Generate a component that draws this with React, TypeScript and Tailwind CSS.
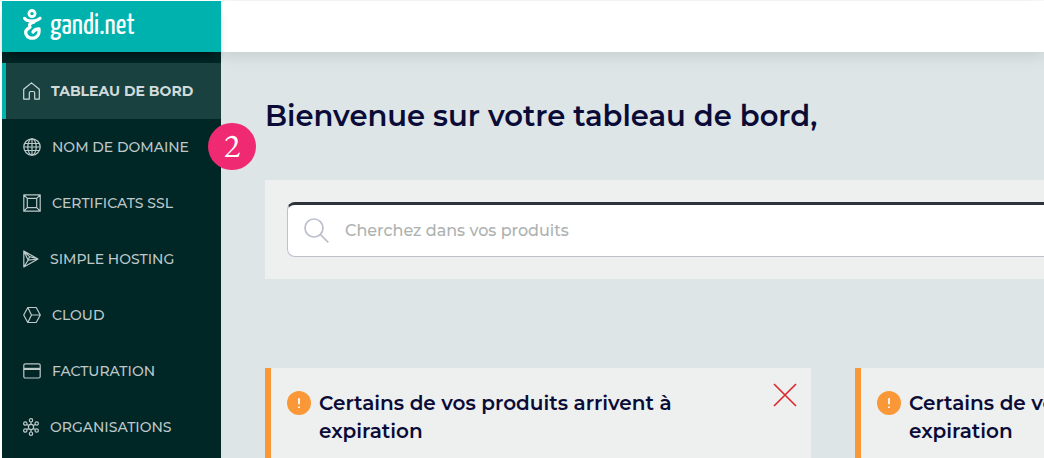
import type { ReactNode } from "react";

type NavItem = { label: string; icon: ReactNode; active?: boolean; badge?: string };

function Icon({ children, width = 18 }: { children: ReactNode; width?: number }) {
  return (
    <svg
      width={width}
      height="18"
      viewBox={`0 0 ${width} 18`}
      fill="none"
      stroke="currentColor"
      strokeWidth="1.2"
      strokeLinejoin="round"
      className="shrink-0"
      aria-hidden="true"
    >
      {children}
    </svg>
  );
}

const items: NavItem[] = [
  {
    label: "Tableau de bord",
    active: true,
    icon: (
      <Icon width={17}>
        <path d="M.7 7.2 8.5.9l7.8 6.3v9.9h-4.6V11c0-.9-.6-1.5-1.5-1.5H7.8c-.9 0-1.5.6-1.5 1.5v6.1H.7z" />
      </Icon>
    ),
  },
  {
    label: "Nom de domaine",
    badge: "2",
    icon: (
      <Icon>
        <circle cx="9" cy="9" r="8.2" />
        <ellipse cx="9" cy="9" rx="4.2" ry="8.2" />
        <path d="M9 .8v16.4M1.8 5.5h14.4M.8 9h16.4M1.8 12.5h14.4" />
      </Icon>
    ),
  },
  {
    label: "Certificats SSL",
    icon: (
      <Icon>
        <path d="M.8.8h16.4v16.4H.8zM4.3 4.3h9.4v9.4H4.3zM.8.8l3.5 3.5M17.2.8l-3.5 3.5M.8 17.2l3.5-3.5M17.2 17.2l-3.5-3.5" />
      </Icon>
    ),
  },
  {
    label: "Simple hosting",
    icon: (
      <Icon width={16}>
        <path d="M.8 1v16l14.2-8zM.8 1l5.7 5.6L15 9l-9.8 1.2zM6.5 6.6 5.2 10.2.8 17" />
      </Icon>
    ),
  },
  {
    label: "Cloud",
    icon: (
      <Icon>
        <path d="M4.8 1.5h8.4L17.3 9l-4.1 7.5H4.8L.7 9zM4.8 1.5 8.5 9l-3.7 7.5M8.5 9h8.8" />
      </Icon>
    ),
  },
  {
    label: "Facturation",
    icon: (
      <Icon>
        <rect x=".8" y="1.8" width="16.4" height="14.2" rx="1.5" />
        <path d="M.8 6.9h16.4" strokeWidth="2.2" />
      </Icon>
    ),
  },
  {
    label: "Organisations",
    icon: (
      <Icon width={16}>
        <circle cx="8" cy="9" r="2.6" />
        <circle cx="8" cy="2.3" r="1.7" />
        <circle cx="8" cy="15.7" r="1.7" />
        <circle cx="2.3" cy="5.5" r="1.7" />
        <circle cx="13.7" cy="5.5" r="1.7" />
        <circle cx="2.3" cy="12.5" r="1.7" />
        <circle cx="13.7" cy="12.5" r="1.7" />
        <path d="M8 4v2.4M8 11.6V14M3.7 6.4 5.8 7.6M12.3 6.4l-2.1 1.2M3.7 11.6l2.1-1.2M12.3 11.6l-2.1-1.2" />
      </Icon>
    ),
  },
];

function Logo() {
  return (
    <svg width="20" height="32" viewBox="0 0 20 32" fill="none" stroke="white" strokeLinecap="round" strokeLinejoin="round" aria-hidden="true">
      <circle cx="10" cy="4.6" r="3.1" strokeWidth="2.8" />
      <path d="M2.6 9.3C4.5 12.8 14 13 18 9.3" strokeWidth="3.2" />
      <path
        d="M12 13C8 13.700 6.500 16 8 18.200 4.500 20 3 22.500 4 25.300 5.200 28.800 9.800 30.200 13.400 28.400 16.300 27 17.500 24 17 20 14 20 12 21 11 23"
        strokeWidth="3.3"
      />
    </svg>
  );
}

function AlertCard() {
  return (
    <article className="flex w-[546px] shrink-0 items-start border-l-[6px] border-[#fa9837] bg-[#eef0ef] pt-[21px] pr-3 pb-10 pl-4">
      <svg width="24" height="24" viewBox="0 0 24 24" className="mt-0.5 shrink-0" aria-hidden="true">
        <circle cx="12" cy="12" r="12" fill="#fa9837" />
        <path d="M12 7.3v6M12 15.5v1.6" stroke="white" strokeWidth="1.8" />
      </svg>
      <h2 className="ml-2 w-[380px] text-xl leading-7 font-semibold text-[#0b0b37]">
        Certains de vos produits arrivent à expiration
      </h2>
      <button type="button" aria-label="Fermer" className="-mt-2 ml-auto p-0.5 text-[#dc2b2f]">
        <svg width="24" height="24" viewBox="0 0 24 24" fill="none" stroke="currentColor" strokeWidth="1.7" aria-hidden="true">
          <path d="m1 1 22 22M23 1 1 23" />
        </svg>
      </button>
    </article>
  );
}

export default function App() {
  return (
    <div className="flex h-screen overflow-hidden bg-white pt-px pl-0.5 font-[Montserrat,Inter,'Open_Sans',sans-serif]">
      <aside className="relative z-10 flex w-[219px] shrink-0 flex-col bg-[#012626]">
        <a href="#" className="flex h-[51px] shrink-0 items-center gap-2 bg-[#00b2ad] pb-1 pl-5 text-white shadow-[0_9px_9px_-6px_#001010]">
          <Logo />
          <span className="pt-1 font-['Yanone_Kaffeesatz','Open_Sans_Condensed','Roboto_Condensed','Liberation_Sans_Narrow','Open_Sans',sans-serif] text-[29px] leading-8">
            gandi.net
          </span>
        </a>
        <nav className="mt-[11px]">
          <ul>
            {items.map((item) => (
              <li key={item.label} className="relative">
                <a
                  href="#"
                  className={`flex h-14 items-center gap-[11px] border-l-4 pl-[17px] text-sm whitespace-nowrap uppercase ${
                    item.active
                      ? "border-[#00b2ad] bg-[#19413f] font-bold text-[#d0dada]"
                      : "border-transparent font-medium text-[#bdc8c8]"
                  }`}
                >
                  {item.icon}
                  {item.label}
                </a>
                {item.badge && (
                  <span className="absolute top-1 -right-[35px] flex h-[47px] w-12 items-center justify-center rounded-full bg-[#f02a72] pb-1 font-['EB_Garamond','Liberation_Serif',serif] text-[34px] leading-none text-white">
                    {item.badge}
                  </span>
                )}
              </li>
            ))}
          </ul>
        </nav>
      </aside>
      <div className="flex min-w-0 flex-1 flex-col bg-[#dde5e7]">
        <header className="h-[51px] shrink-0 bg-white shadow-[0_2px_16px_#00000022]" />
        <main className="min-w-0 overflow-hidden pt-11 pl-11">
          <h1 className="text-[29px] leading-10 font-semibold whitespace-nowrap text-[#0b0b37]">
            Bienvenue sur votre tableau de bord,
          </h1>
          <section className="mt-11 bg-[#eef0ef] py-[22px] pl-[22px]">
            <label className="flex h-[55px] items-center gap-4 rounded-l-lg border border-t-[3px] border-r-0 border-[#bcbfcc] border-t-[#2c333b] bg-white pl-4">
              <svg width="25" height="25" viewBox="0 0 25 25" fill="none" stroke="#bcbfcc" strokeWidth="1.7" className="shrink-0" aria-hidden="true">
                <circle cx="10" cy="10" r="9" />
                <path d="m16.3 16.3 8 8" />
              </svg>
              <input
                type="search"
                aria-label="Cherchez dans vos produits"
                placeholder="Cherchez dans vos produits"
                className="min-w-0 flex-1 bg-transparent text-base font-medium outline-none placeholder:text-[#adb2b0]"
              />
            </label>
          </section>
          <div className="mt-[89px] flex gap-11">
            <AlertCard />
            <AlertCard />
          </div>
        </main>
      </div>
    </div>
  );
}
